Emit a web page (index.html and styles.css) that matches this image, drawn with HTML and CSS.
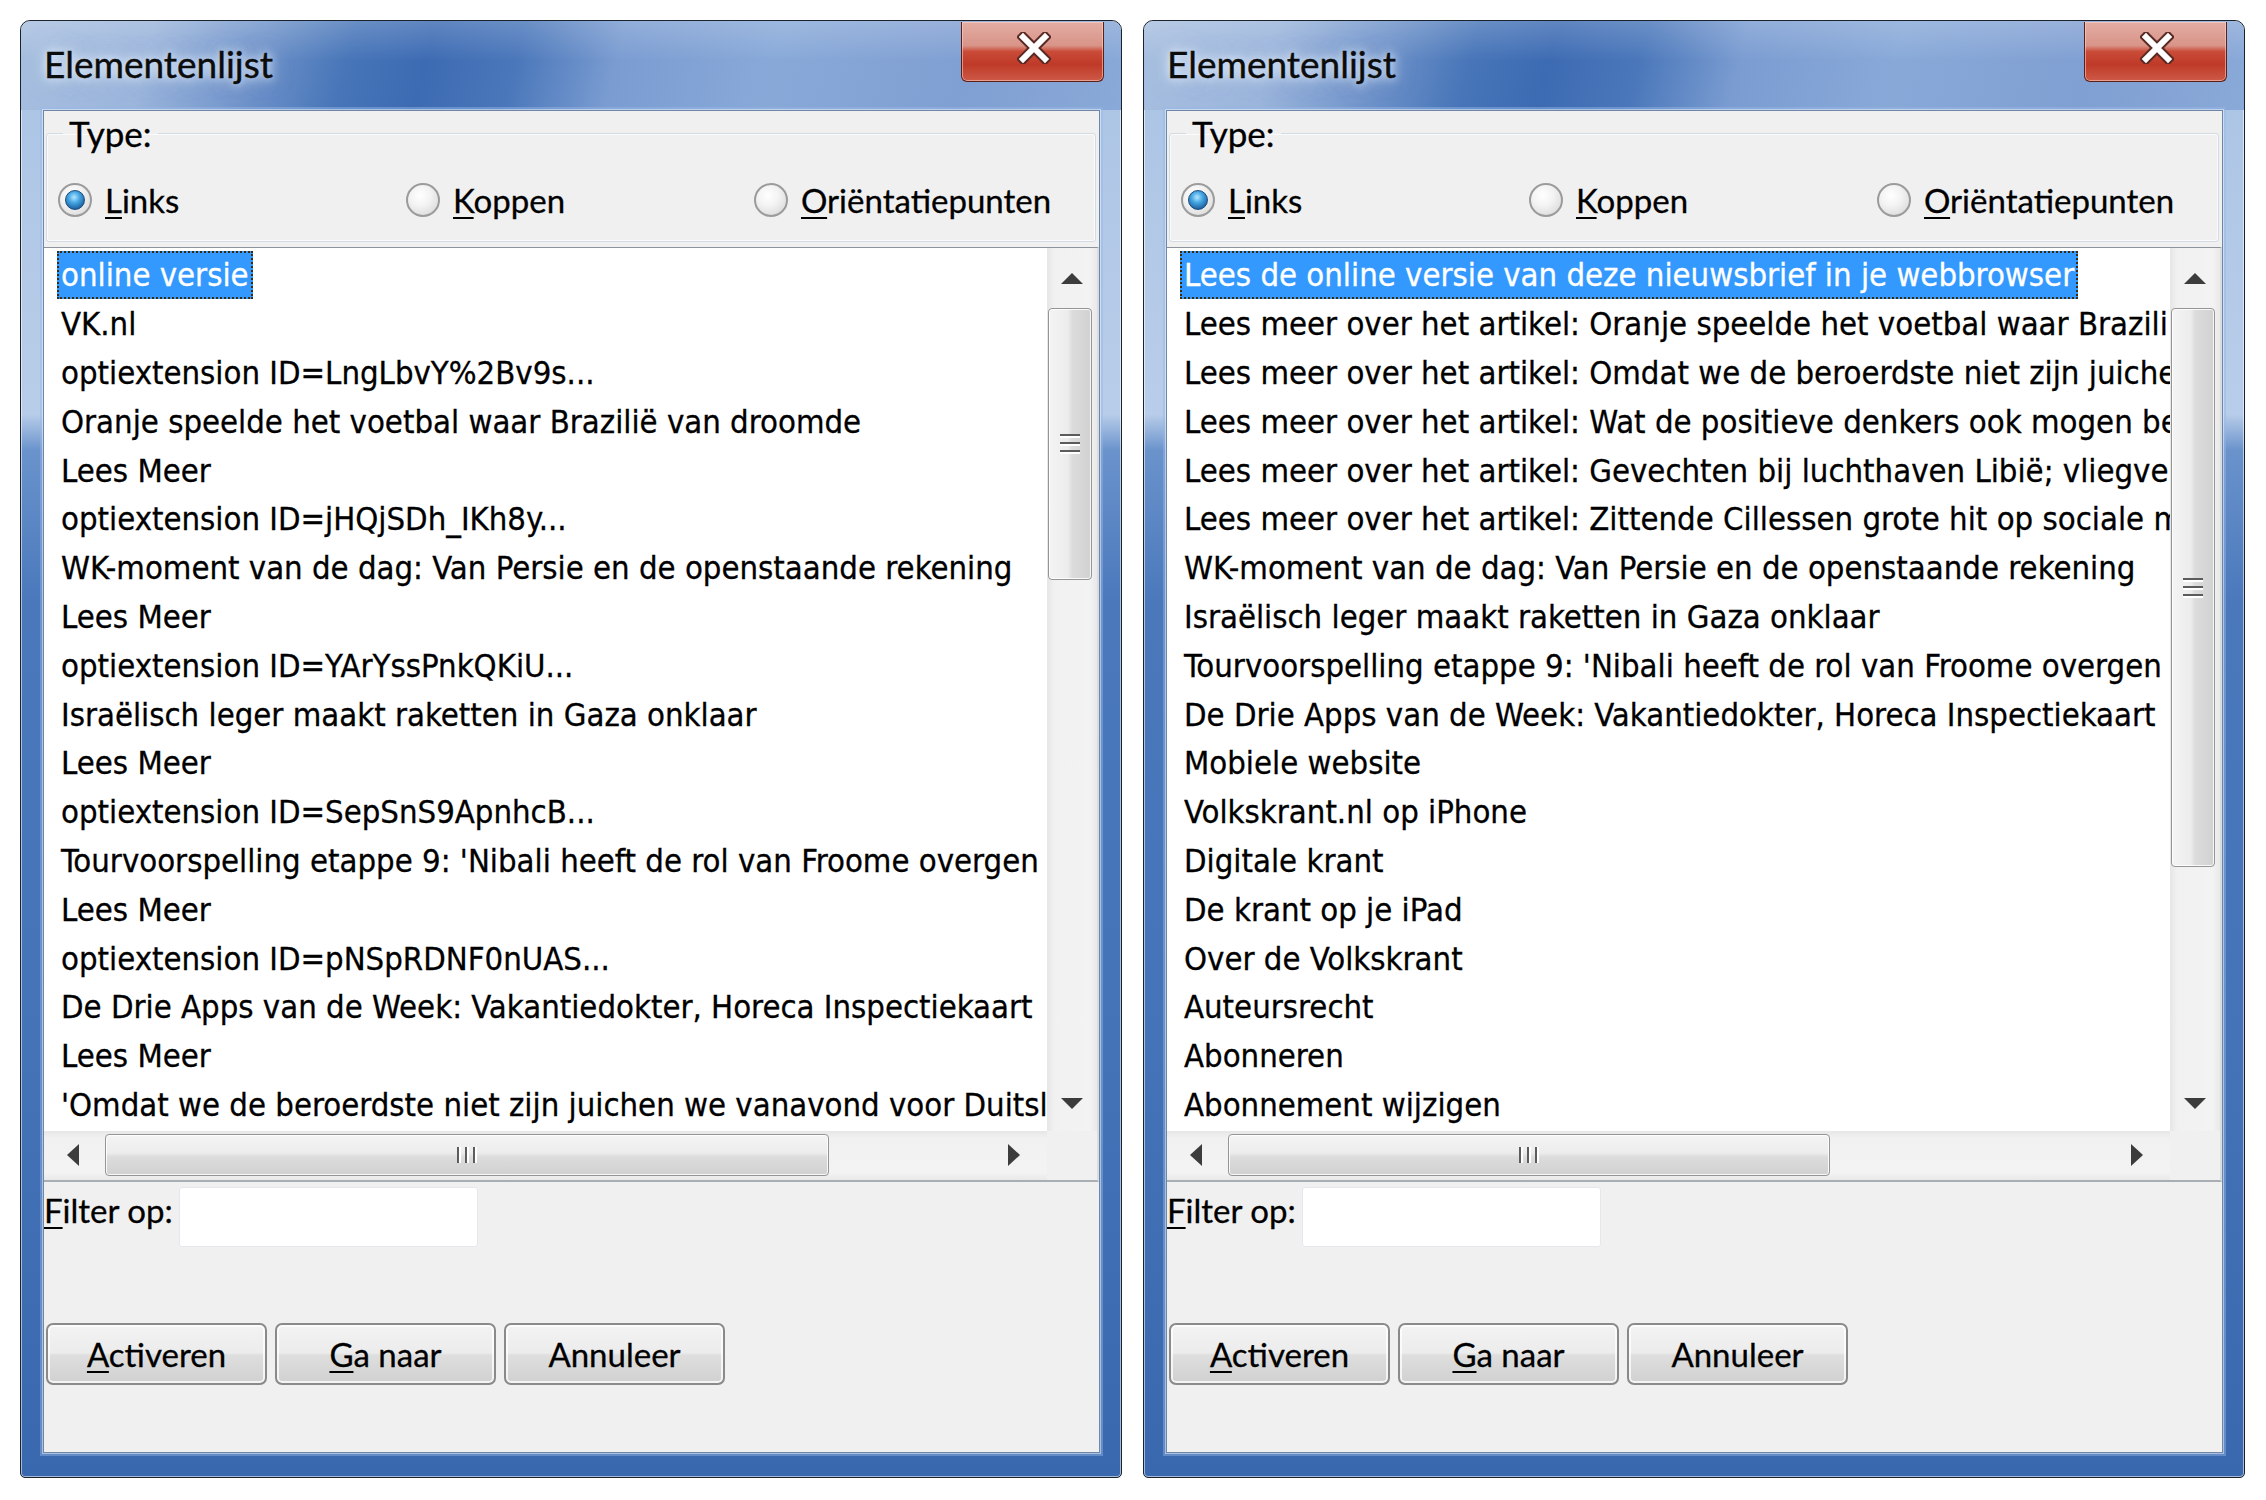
FILE: index.html
```html
<!DOCTYPE html>
<html lang="nl">
<head>
<meta charset="utf-8">
<title>Elementenlijst</title>
<link rel="stylesheet" href="styles.css">
</head>
<body>
<main class="desktop">

  <section class="window">
    <header class="titlebar">
      <h1 class="title">Elementenlijst</h1>
      <button class="close" aria-label="Sluiten">
        <svg width="34" height="32" viewBox="0 0 34 32"><path class="x-out" d="M6 5 L28 27 M28 5 L6 27"/><path class="x-in" d="M6 5 L28 27 M28 5 L6 27"/></svg>
      </button>
    </header>
    <div class="client">
      <fieldset class="group">
        <legend>Type:</legend>
        <label class="radio"><span class="knob on"></span><span><u>L</u>inks</span></label>
        <label class="radio"><span class="knob"></span><span><u>K</u>oppen</span></label>
        <label class="radio"><span class="knob"></span><span><u>O</u>riëntatiepunten</span></label>
      </fieldset>
      <div class="listbox">
        <ul class="items">
          <li class="sel"><span>online versie</span></li>
          <li><span>VK.nl</span></li>
          <li><span>optiextension ID=LngLbvY%2Bv9s...</span></li>
          <li><span>Oranje speelde het voetbal waar Brazilië van droomde</span></li>
          <li><span>Lees Meer</span></li>
          <li><span>optiextension ID=jHQjSDh_IKh8y...</span></li>
          <li><span>WK-moment van de dag: Van Persie en de openstaande rekening</span></li>
          <li><span>Lees Meer</span></li>
          <li><span>optiextension ID=YArYssPnkQKiU...</span></li>
          <li><span>Israëlisch leger maakt raketten in Gaza onklaar</span></li>
          <li><span>Lees Meer</span></li>
          <li><span>optiextension ID=SepSnS9ApnhcB...</span></li>
          <li><span>Tourvoorspelling etappe 9: 'Nibali heeft de rol van Froome overgen</span></li>
          <li><span>Lees Meer</span></li>
          <li><span>optiextension ID=pNSpRDNF0nUAS...</span></li>
          <li><span>De Drie Apps van de Week: Vakantiedokter, Horeca Inspectiekaart</span></li>
          <li><span>Lees Meer</span></li>
          <li><span>'Omdat we de beroerdste niet zijn juichen we vanavond voor Duitsl</span></li>
        </ul>
        <div class="vscroll">
          <div class="sbtn up"><svg width="24" height="13" viewBox="0 0 24 13"><path d="M12 1 L23 12 H1 Z"/></svg></div>
          <div class="vthumb short"><span class="grip-h"></span></div>
          <div class="track"></div>
          <div class="sbtn down"><svg width="24" height="13" viewBox="0 0 24 13"><path d="M1 1 H23 L12 12 Z"/></svg></div>
        </div>
        <div class="hscroll">
          <div class="sbtn left"><svg width="14" height="24" viewBox="0 0 14 24"><path d="M13 1 V23 L1 12 Z"/></svg></div>
          <div class="hthumb wide"><span class="grip-v"></span></div>
          <div class="track"></div>
          <div class="sbtn right"><svg width="14" height="24" viewBox="0 0 14 24"><path d="M1 1 V23 L13 12 Z"/></svg></div>
        </div>
        <div class="corner"></div>
      </div>
      <div class="filter">
        <label class="flabel"><u>F</u>ilter op:</label>
        <span class="textbox"></span>
      </div>
      <div class="buttons">
        <button class="btn"><u>A</u>ctiveren</button>
        <button class="btn"><u>G</u>a naar</button>
        <button class="btn">Annuleer</button>
      </div>
    </div>
  </section>

  <section class="window">
    <header class="titlebar">
      <h1 class="title">Elementenlijst</h1>
      <button class="close" aria-label="Sluiten">
        <svg width="34" height="32" viewBox="0 0 34 32"><path class="x-out" d="M6 5 L28 27 M28 5 L6 27"/><path class="x-in" d="M6 5 L28 27 M28 5 L6 27"/></svg>
      </button>
    </header>
    <div class="client">
      <fieldset class="group">
        <legend>Type:</legend>
        <label class="radio"><span class="knob on"></span><span><u>L</u>inks</span></label>
        <label class="radio"><span class="knob"></span><span><u>K</u>oppen</span></label>
        <label class="radio"><span class="knob"></span><span><u>O</u>riëntatiepunten</span></label>
      </fieldset>
      <div class="listbox">
        <ul class="items">
          <li class="sel"><span>Lees de online versie van deze nieuwsbrief in je webbrowser</span></li>
          <li><span>Lees meer over het artikel: Oranje speelde het voetbal waar Brazili</span></li>
          <li><span>Lees meer over het artikel: Omdat we de beroerdste niet zijn juiche</span></li>
          <li><span>Lees meer over het artikel: Wat de positieve denkers ook mogen be</span></li>
          <li><span>Lees meer over het artikel: Gevechten bij luchthaven Libië; vliegver</span></li>
          <li><span>Lees meer over het artikel: Zittende Cillessen grote hit op sociale m</span></li>
          <li><span>WK-moment van de dag: Van Persie en de openstaande rekening</span></li>
          <li><span>Israëlisch leger maakt raketten in Gaza onklaar</span></li>
          <li><span>Tourvoorspelling etappe 9: 'Nibali heeft de rol van Froome overgen</span></li>
          <li><span>De Drie Apps van de Week: Vakantiedokter, Horeca Inspectiekaart</span></li>
          <li><span>Mobiele website</span></li>
          <li><span>Volkskrant.nl op iPhone</span></li>
          <li><span>Digitale krant</span></li>
          <li><span>De krant op je iPad</span></li>
          <li><span>Over de Volkskrant</span></li>
          <li><span>Auteursrecht</span></li>
          <li><span>Abonneren</span></li>
          <li><span>Abonnement wijzigen</span></li>
        </ul>
        <div class="vscroll">
          <div class="sbtn up"><svg width="24" height="13" viewBox="0 0 24 13"><path d="M12 1 L23 12 H1 Z"/></svg></div>
          <div class="vthumb long"><span class="grip-h"></span></div>
          <div class="track"></div>
          <div class="sbtn down"><svg width="24" height="13" viewBox="0 0 24 13"><path d="M1 1 H23 L12 12 Z"/></svg></div>
        </div>
        <div class="hscroll">
          <div class="sbtn left"><svg width="14" height="24" viewBox="0 0 14 24"><path d="M13 1 V23 L1 12 Z"/></svg></div>
          <div class="hthumb narrow"><span class="grip-v"></span></div>
          <div class="track"></div>
          <div class="sbtn right"><svg width="14" height="24" viewBox="0 0 14 24"><path d="M1 1 V23 L13 12 Z"/></svg></div>
        </div>
        <div class="corner"></div>
      </div>
      <div class="filter">
        <label class="flabel"><u>F</u>ilter op:</label>
        <span class="textbox"></span>
      </div>
      <div class="buttons">
        <button class="btn"><u>A</u>ctiveren</button>
        <button class="btn"><u>G</u>a naar</button>
        <button class="btn">Annuleer</button>
      </div>
    </div>
  </section>

</main>
</body>
</html>
```

FILE: styles.css
```css
* { box-sizing: border-box; }

html, body {
  margin: 0;
  background: #ffffff;
}

body {
  font-family: "Lato", "Noto Sans", sans-serif;
  color: #000;
}

.desktop {
  display: flex;
  gap: 21px;
  padding: 20px 0 0 20px;
}

/* ---------- window frame ---------- */
.window {
  width: 1102px;
  height: 1458px;
  flex: none;
  display: flex;
  flex-direction: column;
  border: 1px solid #1a222c;
  border-radius: 10px 10px 5px 5px;
  overflow: hidden;
  background: linear-gradient(to bottom,
    #aac3e4 0%, #b8cde9 27%, #6a93cc 29.5%, #4a78bb 40%,
    #4473b8 70%, #3a68ae 100%);
  box-shadow: inset 0 0 0 1px rgba(255,255,255,.55);
}

.titlebar {
  height: 89px;
  flex: none;
  display: flex;
  justify-content: space-between;
  align-items: flex-start;
  padding: 0 17px 0 23px;
  background:
    linear-gradient(to bottom, rgba(255,255,255,.18) 0%, rgba(255,255,255,0) 45%),
    linear-gradient(104deg,
      #a7bfdf 0%, #9bb5db 12%, #7396cb 21%, #4775b8 30%,
      #3d6bb3 37%, #4a77ba 45%, #7a9cd1 54%, #88a9d8 68%,
      #809fd2 85%, #89a9d8 100%);
  border-radius: 9px 9px 0 0;
}

.title {
  margin: 0;
  padding-top: 25px;
  font-family: "Lato", sans-serif;
  font-weight: 400;
  font-size: 37px;
  line-height: 36px;
  color: #0c0c0c;
  -webkit-text-stroke: 0.4px #0c0c0c;
  text-shadow: 0 0 8px rgba(235,244,255,.9), 0 0 14px rgba(235,244,255,.7), 0 0 22px rgba(235,244,255,.5);
}

.close {
  width: 143px;
  height: 60px;
  margin-top: 1px;
  padding: 0 0 8px 2px;
  display: flex;
  align-items: center;
  justify-content: center;
  border: 1px solid #5a2018;
  border-top: none;
  border-radius: 0 0 6px 6px;
  background: linear-gradient(to bottom,
    #e3ada4 0%, #d99488 40%, #c94b38 50%, #bf3a28 72%, #cd5a47 100%);
  box-shadow: inset 0 0 0 1px rgba(255,215,205,.55);
}

.close svg path { fill: none; stroke-linecap: square; }
.close .x-out { stroke: #5b2a24; stroke-width: 10; }
.close .x-in { stroke: #ffffff; stroke-width: 6; }

/* ---------- client area ---------- */
.client {
  flex: 1;
  margin: 0 21px 24px 22px;
  display: flex;
  flex-direction: column;
  background: #f0f0f0;
  border: 1px solid #6f86a6;
  box-shadow: 0 0 0 1px rgba(255,255,255,.45), 0 0 0 3px rgba(150,185,230,.45);
  -webkit-text-stroke: 0.3px #000;
}

.group {
  margin: 2px 3px 5px 2px;
  padding: 30px 0 24px 11px;
  border: 1px solid #d2dae2;
  border-radius: 3px;
  box-shadow: inset 0 0 0 1px #fbfbfb;
  display: grid;
  grid-template-columns: repeat(3, 348px);
  min-width: 0;
}

.group legend {
  margin-left: 5px;
  padding: 0 6px;
  font-size: 35px;
  line-height: 40px;
}

.radio {
  display: flex;
  align-items: center;
  gap: 13px;
  height: 34px;
  font-size: 33px;
  line-height: 34px;
}

.radio u, .flabel u, .btn u { text-decoration-thickness: 2px; text-underline-offset: 4px; }

.knob {
  width: 34px;
  height: 34px;
  flex: none;
  border-radius: 50%;
  border: 2px solid #9b9b9b;
  background: radial-gradient(circle at 40% 35%, #ffffff 0%, #f3f3f3 40%, #d2d2d2 100%);
  display: flex;
  align-items: center;
  justify-content: center;
}

.knob.on::after {
  content: "";
  width: 18px;
  height: 18px;
  border-radius: 50%;
  border: 1px solid #1b4b7c;
  background: radial-gradient(circle at 45% 35%, #b5e6ff 0%, #47a8e4 35%, #1f64a3 75%, #173f6a 100%);
}

/* ---------- list box ---------- */
.listbox {
  height: 935px;
  flex: none;
  display: grid;
  grid-template-columns: 1fr 50px;
  grid-template-rows: 1fr 49px;
  background: #ffffff;
  border-top: 1px solid #8c939b;
  border-bottom: 2px solid #a9aeb4;
  border-right: 2px solid #d9dde2;
}

.items {
  margin: 0;
  padding: 3px 0 0;
  list-style: none;
  overflow: hidden;
  font-family: "DejaVu Sans Condensed", "DejaVu Sans", sans-serif;
  font-stretch: condensed;
  font-size: 32.6px;
  min-width: 0;
}

.items li {
  height: 48.8px;
  padding-left: 13px;
  white-space: nowrap;
  display: flex;
  align-items: center;
}

.items span {
  display: inline-block;
  line-height: 44px;
  padding: 0 2px;
  border: 2px dotted transparent;
}

.items .sel span {
  background: #3399ff;
  color: #ffffff;
  -webkit-text-stroke: 0.3px #ffffff;
  border-color: #3b2b12;
}

/* scrollbars */
.vscroll {
  display: flex;
  flex-direction: column;
  background: linear-gradient(to right, #e6e6e6 0%, #f1f1f1 15%, #f3f3f3 85%, #e9e9e9 100%);
}

.hscroll {
  display: flex;
  align-items: flex-start;
  background: linear-gradient(to bottom, #e6e6e6 0%, #f1f1f1 15%, #f3f3f3 85%, #e9e9e9 100%);
}

.corner { background: #f0f0f0; }

.track { flex: 1; }

.sbtn {
  flex: none;
  display: flex;
  align-items: center;
  justify-content: center;
}
.sbtn svg path { fill: #3c3c3c; }
.sbtn.up { height: 60px; }
.sbtn.down { height: 56px; }
.sbtn.left { width: 58px; height: 48px; }
.sbtn.right { width: 52px; height: 48px; margin-right: 7px; }

.vthumb {
  width: 44px;
  margin-left: 1px;
  flex: none;
  border: 1px solid #959595;
  border-radius: 4px;
  background: linear-gradient(to right, #f4f4f4 0%, #ececec 45%, #dcdcdc 55%, #d1d1d1 100%);
  box-shadow: inset 0 0 0 1px rgba(255,255,255,.85);
  display: flex;
  align-items: center;
  justify-content: center;
}
.vthumb.short { height: 272px; }
.vthumb.long { height: 559px; }

.hthumb {
  height: 42px;
  margin: 3px 0 0 3px;
  flex: none;
  border: 1px solid #959595;
  border-radius: 4px;
  background: linear-gradient(to bottom, #f4f4f4 0%, #ececec 45%, #dcdcdc 55%, #d1d1d1 100%);
  box-shadow: inset 0 0 0 1px rgba(255,255,255,.85);
  display: flex;
  align-items: center;
  justify-content: center;
}
.hthumb.wide { width: 724px; }
.hthumb.narrow { width: 602px; }

.grip-h {
  width: 20px;
  height: 20px;
  background: repeating-linear-gradient(to bottom, #5c5c5c 0 2px, #ffffff 2px 4px, transparent 4px 8px);
}
.grip-v {
  width: 20px;
  height: 16px;
  background: repeating-linear-gradient(to right, #5c5c5c 0 2px, #ffffff 2px 4px, transparent 4px 8px);
}

/* ---------- filter + buttons ---------- */
.filter {
  display: flex;
  align-items: flex-start;
  margin-top: 5px;
}

.flabel {
  width: 135px;
  flex: none;
  padding-top: 3px;
  font-size: 33px;
  line-height: 40px;
}

.textbox {
  width: 299px;
  height: 60px;
  background: #ffffff;
  border: 1px solid #e4e8ed;
  border-radius: 3px;
}

.buttons {
  display: flex;
  gap: 8px;
  margin: 76px 0 0 2px;
}

.btn {
  width: 221px;
  height: 62px;
  padding: 0;
  font-family: "Lato", sans-serif;
  font-size: 33px;
  color: #000;
  -webkit-text-stroke: 0.3px #000;
  border: 2px solid #8a8a8a;
  border-radius: 7px;
  background: linear-gradient(to bottom, #f3f3f3 0%, #ececec 48%, #dedede 52%, #d0d0d0 100%);
  box-shadow: inset 0 0 0 2px rgba(255,255,255,.75);
}
```
